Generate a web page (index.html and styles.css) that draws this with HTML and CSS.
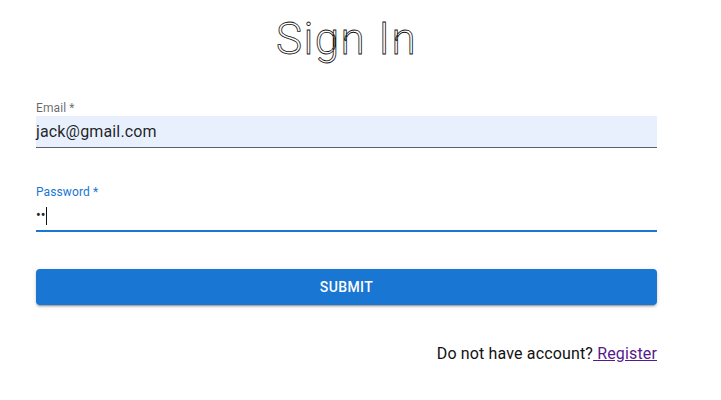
FILE: index.html
```html
<!DOCTYPE html>
<html>
<head>
<meta charset="utf-8">
<link rel="stylesheet" href="styles.css">
</head>
<body>
<main class="container">
  <h1 class="title">Sign In</h1>
  <form class="form">
    <div class="field">
      <label class="label">Email *</label>
      <div class="input autofill"><span class="value">jack@gmail.com</span></div>
    </div>
    <div class="field field-focused">
      <label class="label label-focused">Password *</label>
      <div class="input input-focused"><span class="value dots">••</span><span class="caret"></span></div>
    </div>
    <button type="button" class="submit">Submit</button>
  </form>
  <p class="footer">Do not have account?<a class="link" href="#"> Register</a></p>
</main>
</body>
</html>
```

FILE: styles.css
```css
html, body {
  margin: 0;
  padding: 0;
  background: #fff;
}
body {
  font-family: Roboto, "Liberation Sans", sans-serif;
  color: rgba(0, 0, 0, 0.87);
}
.container {
  margin-left: 36px;
  width: 621px;
  display: flex;
  flex-direction: column;
}
.title {
  margin: 14px 0 0;
  height: 50px;
  line-height: 50px;
  font-size: 44px;
  font-weight: 300;
  letter-spacing: 1.4px;
  text-align: center;
  color: #fff;
  -webkit-text-stroke: 0.8px #111;
}
.form {
  display: flex;
  flex-direction: column;
  margin-top: 36px;
}
.field {
  display: flex;
  flex-direction: column;
}
.field-focused {
  margin-top: 36px;
}
.label {
  height: 16px;
  line-height: 16px;
  font-size: 12px;
  letter-spacing: 0.1px;
  color: rgba(0, 0, 0, 0.6);
}
.label-focused {
  color: #1976d2;
}
.input {
  height: 23px;
  padding: 4px 0 4px;
  border-bottom: 1px solid rgba(0, 0, 0, 0.6);
  display: flex;
  align-items: center;
  font-size: 16px;
  line-height: 23px;
  letter-spacing: 0.15px;
}
.autofill {
  background: #e8f0fe;
}
.input-focused {
  border-bottom: 2px solid #1976d2;
  padding-bottom: 3px;
}
.dots {
  font-size: 14px;
  letter-spacing: 0;
  color: #222;
}
.caret {
  display: inline-block;
  width: 1px;
  height: 18px;
  margin-left: 1px;
  background: #111;
}
.submit {
  margin-top: 37px;
  height: 36px;
  border: 0;
  border-radius: 4px;
  background: #1976d2;
  color: #fff;
  font-family: Roboto, "Liberation Sans", sans-serif;
  font-size: 14px;
  font-weight: 500;
  letter-spacing: 0.4px;
  text-transform: uppercase;
  box-shadow: 0 3px 1px -2px rgba(0,0,0,0.2), 0 2px 2px 0 rgba(0,0,0,0.14), 0 1px 5px 0 rgba(0,0,0,0.12);
}
.footer {
  margin: 37px 0 0;
  height: 24px;
  line-height: 24px;
  font-size: 16px;
  letter-spacing: 0.15px;
  text-align: right;
  color: #111;
}
.link {
  color: #551a8b;
  text-decoration: underline;
}
```
